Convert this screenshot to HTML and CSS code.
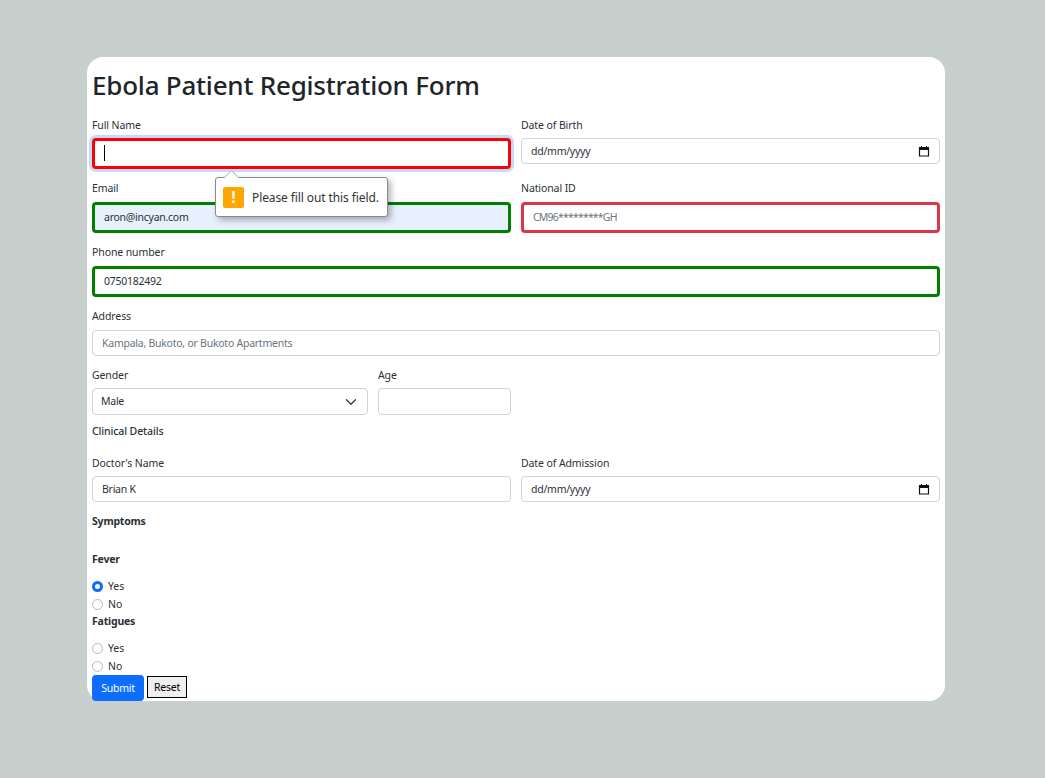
FILE: index.html
```html
<!DOCTYPE html>
<html lang="en">

<head>
  <meta charset="UTF-8">
  <meta name="viewport" content="width=device-width, initial-scale=1.0">
  <title>Ebola Patient Registration Form</title>
  <link rel="stylesheet" href="styles.css">
</head>

<body>
<form class="card">
  <h1>Ebola Patient Registration Form</h1>

  <div class="row row-low">
    <div class="field">
      <label for="name">Full Name</label>
      <div class="caret-wrap">
        <input class="control thick focused" type="text" id="name">
        <span class="caret"></span>
        <div class="bubble">
          <span class="bubble-arrow"></span>
          <span class="bubble-icon">!</span>
          <span class="bubble-text">Please fill out this field.</span>
        </div>
      </div>
    </div>
    <div class="field">
      <label for="dob">Date of Birth</label>
      <div class="control date">
        <span>dd/mm/yyyy</span>
        <svg width="12" height="12" viewBox="0 0 12 12"><path d="M1.5 2.5h9v8.5h-9z" fill="none" stroke="#111" stroke-width="1.2"/><path d="M1 3h10v2H1z" fill="#111"/><path d="M3.5 1v2M8.5 1v2" stroke="#111"/></svg>
      </div>
    </div>
  </div>

  <div class="row">
    <div class="field">
      <label for="email">Email</label>
      <input class="control thick good autofill" type="text" id="email" value="aron@incyan.com">
    </div>
    <div class="field">
      <label for="nid">National ID</label>
      <input class="control thick bad masked" type="text" id="nid" placeholder="CM96*********GH">
    </div>
  </div>

  <div class="field">
    <label for="phone">Phone number</label>
    <input class="control thick good" type="text" id="phone" value="0750182492">
  </div>

  <div class="field">
    <label for="address">Address</label>
    <input class="control" type="text" id="address" placeholder="Kampala, Bukoto, or Bukoto Apartments">
  </div>

  <div class="row row-gender">
    <div class="field">
      <label for="gender">Gender</label>
      <select class="control picker" id="gender">
        <option>Male</option>
        <option>Female</option>
      </select>
    </div>
    <div class="field">
      <label for="age">Age</label>
      <input class="control age" type="text" id="age">
    </div>
  </div>

  <p class="heading clinical">Clinical Details</p>

  <div class="row row-low">
    <div class="field">
      <label for="doctor">Doctor's Name</label>
      <input class="control" type="text" id="doctor" value="Brian K">
    </div>
    <div class="field">
      <label for="admission">Date of Admission</label>
      <div class="control date">
        <span>dd/mm/yyyy</span>
        <svg width="12" height="12" viewBox="0 0 12 12"><path d="M1.5 2.5h9v8.5h-9z" fill="none" stroke="#111" stroke-width="1.2"/><path d="M1 3h10v2H1z" fill="#111"/><path d="M3.5 1v2M8.5 1v2" stroke="#111"/></svg>
      </div>
    </div>
  </div>

  <p class="heading strong symptoms">Symptoms</p>

  <p class="heading strong fever">Fever</p>
  <label class="option"><input type="radio" name="fever" checked> Yes</label>
  <label class="option"><input type="radio" name="fever"> No</label>

  <p class="heading strong fatigues">Fatigues</p>
  <label class="option"><input type="radio" name="fatigues"> Yes</label>
  <label class="option"><input type="radio" name="fatigues"> No</label>

  <div class="actions">
    <button type="button" class="submit">Submit</button>
    <button type="button" class="reset">Reset</button>
  </div>
</form>
</body>

</html>
```

FILE: styles.css
```css
* {
  box-sizing: border-box;
}

body {
  margin: 0;
  min-height: 778px;
  padding: 57px 0 0 87px;
  background: #c7d0cd;
  font-family: "Noto Sans", "Open Sans", sans-serif;
  font-size: 10.5px;
  letter-spacing: -.1px;
  line-height: 18px;
  color: #2b3035;
}

.card {
  display: flex;
  flex-direction: column;
  width: 858px;
  height: 644px;
  padding: 5px 5px 0;
  background: #fff;
  border-radius: 16px;
}

.card > * {
  flex-shrink: 0;
}

h1 {
  margin: 0;
  height: 53px;
  padding-top: 5px;
  font-size: 26px;
  letter-spacing: -.22px;
  line-height: 36px;
  font-weight: 500;
  color: #212529;
}

.row {
  display: grid;
  grid-template-columns: 419px 419px;
  column-gap: 10px;
}

.row-gender {
  grid-template-columns: 276px 133px;
}

.field {
  display: flex;
  flex-direction: column;
  margin-bottom: 10px;
}

.field label {
  display: block;
  height: 18px;
  margin-bottom: 5px;
}

.row-low .field label {
  padding-top: 1px;
}

.row-gender .field label {
  margin-bottom: 4px;
}

.control {
  display: block;
  width: 100%;
  height: 26px;
  padding: 0 9px;
  border: 1px solid #ced4da;
  border-radius: 4px;
  background: #fff;
  font: inherit;
  letter-spacing: -.25px;
  color: #2b3035;
  outline: none;
}

.control::placeholder {
  color: #6c757d;
}

.thick {
  height: 31px;
  padding-bottom: 2px;
  border-width: 3px;
}

.focused {
  border-color: #f00;
  box-shadow: 0 0 0 3px rgba(13, 110, 253, .25);
}

.good {
  border-color: #008000;
}

.bad {
  border-color: #dc3545;
}

.masked {
  letter-spacing: -.8px;
}

.autofill {
  background: #e8f0fe;
}

.date {
  display: flex;
  align-items: center;
  justify-content: space-between;
}

.picker {
  height: 27px;
  appearance: none;
  background: #fff url("data:image/svg+xml,%3csvg xmlns='http://www.w3.org/2000/svg' viewBox='0 0 16 16'%3e%3cpath fill='none' stroke='%23343a40' stroke-linecap='round' stroke-linejoin='round' stroke-width='1.7' d='m2 5 6 6 6-6'/%3e%3c/svg%3e") no-repeat right 10px center / 12px 12px;
  padding-left: 8px;
  padding-bottom: 2px;
}

.age {
  height: 27px;
}

.caret-wrap {
  position: relative;
}

.caret {
  position: absolute;
  left: 12px;
  top: 7px;
  width: 1px;
  height: 16px;
  background: #000;
}

.bubble {
  position: absolute;
  z-index: 2;
  left: 123px;
  top: 39px;
  display: flex;
  align-items: center;
  width: 173px;
  height: 40px;
  padding-left: 7px;
  background: #fff;
  border: 1px solid #8a8a8a;
  border-radius: 3px;
  box-shadow: 3px 3px 6px rgba(0, 0, 0, .3);
}

.bubble-arrow {
  position: absolute;
  left: 10px;
  top: -6px;
  width: 11px;
  height: 11px;
  background: #fff;
  border-top: 1px solid #bbb;
  border-left: 1px solid #bbb;
  transform: rotate(45deg);
}

.bubble-icon {
  width: 21px;
  height: 21px;
  margin-right: 8px;
  background: #ffa500;
  border-radius: 2px;
  color: #fff;
  font-size: 16px;
  font-weight: 700;
  line-height: 21px;
  text-align: center;
}

.bubble-text {
  padding-top: 1px;
  font-size: 12px;
  color: #333;
  white-space: nowrap;
}

.heading {
  margin: 0;
  height: 18px;
  font-weight: 500;
}

.strong {
  font-weight: 700;
  letter-spacing: -.2px;
}

.clinical {
  margin-top: -3px;
  margin-bottom: 13px;
}

.symptoms {
  margin-top: 0;
}

.fever {
  margin-top: 20px;
  margin-bottom: 9px;
}

.fatigues {
  margin-top: -1px;
  margin-bottom: 9px;
}

.option {
  display: flex;
  align-items: center;
  height: 18px;
  gap: 5px;
}

.option input {
  width: 11px;
  height: 11px;
  margin: 0;
  appearance: none;
  border: 1px solid #b5b9bd;
  border-radius: 50%;
  background: #fff;
}

.option input:checked {
  border: 3px solid #0d6efd;
}

.actions {
  display: flex;
  align-items: flex-start;
  gap: 3px;
}

.submit {
  width: 52px;
  height: 26px;
  padding: 0;
  border: 0;
  border-radius: 4px;
  background: #0d6efd;
  color: #fff;
  font: inherit;
  letter-spacing: -.25px;
}

.reset {
  width: 40px;
  height: 22px;
  margin-top: 1px;
  padding: 0;
  border: 1px solid #000;
  border-radius: 0;
  background: #efefef;
  color: #000;
  font: inherit;
  letter-spacing: -.25px;
}
```
